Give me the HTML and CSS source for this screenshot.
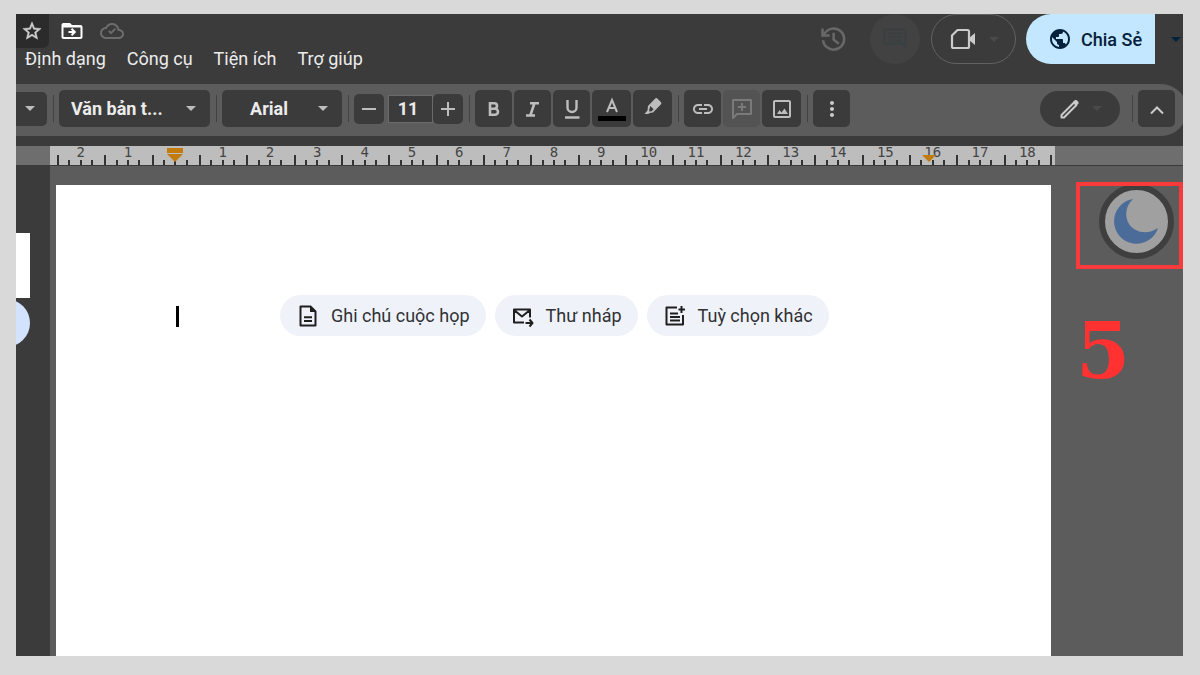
FILE: index.html
```
<!DOCTYPE html>
<html lang="vi">

<head>
    <title>Tài liệu</title>
    <meta charset="utf-8">
    <meta name="viewport" content="width=device-width, initial-scale=1">
    <link rel="stylesheet" href="styles.css">
</head>

<body>
    <div class="window">
        <header class="header">
            <div class="header-left">
                <div class="doc-actions">
                    <button class="star" aria-label="Gắn dấu sao"><svg width="22" height="22" viewBox="0 0 24 24"><path fill="#d0d0d0" stroke="#d0d0d0" stroke-width=".5" d="M22 9.24l-7.19-.62L12 2 9.19 8.63 2 9.24l5.46 4.73L5.82 21 12 17.27 18.18 21l-1.63-7.03L22 9.24zM12 15.4l-3.76 2.27 1-4.28-3.32-2.88 4.38-.38L12 6.1l1.71 4.04 4.38.38-3.32 2.88 1 4.28L12 15.4z"/></svg></button>
                    <button class="icon" aria-label="Di chuyển"><svg width="24" height="24" viewBox="0 0 24 24"><path fill="#fff" d="M20.500 6h-8.500l-2-2H3.500c-1.100 0-2 .9-2 2v12c0 1.100.9 2 2 2h17c1.100 0 2-.9 2-2V8c0-1.100-.9-2-2-2zm0 12H3.500V8.500h17V18zm-8.300-1l4-4-4-4-1.400 1.400 1.600 1.600H8.500v2h3.900l-1.600 1.600z"/></svg></button>
                    <button class="icon" aria-label="Trạng thái tài liệu"><svg width="24" height="24" viewBox="0 0 24 24"><path fill="#6c6c6c" d="M19.350 10.040C18.670 6.590 15.640 4 12 4 9.110 4 6.600 5.640 5.350 8.040 2.340 8.360 0 10.910 0 14c0 3.310 2.690 6 6 6h13c2.760 0 5-2.240 5-5 0-2.640-2.050-4.780-4.650-4.960zM19 18H6c-2.210 0-4-1.790-4-4s1.790-4 4-4h.7C7.370 7.690 9.480 6 12 6c3 0 5.500 2.500 5.500 5.500v.5H19c1.660 0 3 1.340 3 3s-1.340 3-3 3zm-8-5.200l-1.600-1.600-1.300 1.300 2.900 2.900 5-5-1.300-1.300z"/></svg></button>
                </div>
                <nav class="menu">
                    <button>Định dạng</button>
                    <button>Công cụ</button>
                    <button>Tiện ích</button>
                    <button>Trợ giúp</button>
                </nav>
            </div>
            <div class="header-right">
                <button class="icon history" aria-label="Lịch sử"><svg width="30" height="30" viewBox="0 0 24 24"><path fill="#686868" d="M12.500 2.500c-3.300 0-6.200 1.700-7.900 4.300V3.500h-2V10.200h6.700v-2H6c1.200-2.200 3.700-3.700 6.500-3.700a7.500 7.500 0 1 1-7.500 8.500H3a9.500 9.500 0 1 0 9.500-10.500zM11.500 7v6l4.500 3.500 1.200-1.600-3.700-2.900V7z"/></svg></button>
                <button class="comments" aria-label="Nhận xét"><svg width="28" height="28" viewBox="0 0 24 24"><path fill="#3a4040" d="M2 3h20v18l-4-4H2zm2 2v10h16V5zm2 1.500h12v1.500H6zm0 3h12V11H6zm0 3h12V14H6z"/></svg></button>
                <button class="meet" aria-label="Cuộc gọi"><svg width="28" height="24" viewBox="0 0 28 24"><path fill="none" stroke="#cbcbcb" stroke-width="2.200" stroke-linejoin="round" d="M8.500 3H18.500Q20 3 20 4.500V19.500Q20 21 18.500 21H4.500Q3 21 3 19.500V8.500z"/><path fill="#cbcbcb" d="M20 11l6-5v12l-6-5z"/></svg><span class="caret"></span></button>
                <button class="share"><svg width="24" height="24" viewBox="0 0 24 24"><path fill="#06213b" d="M12 2C6.480 2 2 6.480 2 12s4.480 10 10 10 10-4.480 10-10S17.520 2 12 2zm-1 17.930c-3.950-.49-7-3.850-7-7.930 0-.62.08-1.210.21-1.790L9 15v1c0 1.100.9 2 2 2v1.930zm6.900-2.540c-.26-.81-1-1.390-1.900-1.390h-1v-3c0-.55-.45-1-1-1H8v-2h2c.55 0 1-.45 1-1V7h2c1.100 0 2-.9 2-2v-.41c2.930 1.190 5 4.060 5 7.410 0 2.080-.8 3.970-2.100 5.390z"/></svg>Chia Sẻ</button>
                <button class="share-more" aria-label="Tùy chọn chia sẻ"><span class="caret"></span></button>
            </div>
        </header>

        <div class="toolbar">
            <button class="tool zoom" aria-label="Thu phóng"><span class="caret"></span></button>
            <span class="sep"></span>
            <label class="field field-style">
                <select aria-label="Kiểu"><option>Văn bản t...</option></select>
                <span class="caret"></span>
            </label>
            <span class="sep"></span>
            <label class="field field-font">
                <select aria-label="Phông chữ"><option>Arial</option></select>
                <span class="caret"></span>
            </label>
            <span class="sep"></span>
            <div class="size">
                <button class="step" aria-label="Giảm cỡ chữ"><svg width="14" height="14" viewBox="0 0 14 14"><path stroke="#bdbdbd" stroke-width="2" d="M0 7h14"/></svg></button>
                <input type="text" value="11" aria-label="Cỡ chữ">
                <button class="step" aria-label="Tăng cỡ chữ"><svg width="14" height="14" viewBox="0 0 14 14"><path stroke="#bdbdbd" stroke-width="2" d="M0 7h14M7 0v14"/></svg></button>
            </div>
            <span class="sep"></span>
            <div class="group">
                <button class="tool" aria-label="Đậm"><svg width="26" height="26" viewBox="0 0 26 26"><path fill="none" stroke="#bdbdbd" stroke-width="2.600" d="M9 7.300h4.300a2.700 2.700 0 0 1 0 5.400H9zm0 5.400h5a3 3 0 0 1 0 6H9z"/></svg></button>
                <button class="tool" aria-label="Nghiêng"><svg width="26" height="26" viewBox="0 0 26 26"><path fill="none" stroke="#bdbdbd" stroke-width="2.600" d="M10 7.300h9M6 19.500h9M14.500 7l-4 12"/></svg></button>
                <button class="tool" aria-label="Gạch chân"><svg width="26" height="26" viewBox="0 0 26 26"><path fill="none" stroke="#bdbdbd" stroke-width="2.400" d="M8.500 4v7.500a4.500 4.500 0 0 0 9 0V4M6 21.500h14.500"/></svg></button>
                <button class="tool wide" aria-label="Màu văn bản"><svg width="30" height="30" viewBox="0 0 30 30"><path fill="none" stroke="#bdbdbd" stroke-width="2" d="M10 18l5-12 5 12M11.700 14h6.600"/><path d="M1 22h28v5H1z"/></svg></button>
                <button class="tool wide" aria-label="Màu đánh dấu"><svg width="24" height="28" viewBox="0 0 24 28"><path fill="#bdbdbd" fill-rule="evenodd" d="M14 3.700q1.300-1.300 2.600 0l3.200 3.200q1.300 1.300 0 2.600L12 17.500l-3.500.5-1 1H3.500L6.500 15.500l.5-4.500zm-4.700 7.300 3.300 3.300-2 2-2.400.2.200-2.600z"/></svg></button>
            </div>
            <span class="sep"></span>
            <div class="group">
                <button class="tool" aria-label="Chèn liên kết"><svg width="24" height="24" viewBox="0 0 24 24"><path fill="#bdbdbd" d="M3.900 12c0-1.710 1.390-3.100 3.100-3.100h4V7H7c-2.760 0-5 2.240-5 5s2.240 5 5 5h4v-1.900H7c-1.710 0-3.100-1.390-3.100-3.100zM8 13h8v-2H8v2zm9-6h-4v1.900h4c1.710 0 3.100 1.390 3.100 3.100s-1.390 3.100-3.100 3.100h-4V17h4c2.760 0 5-2.240 5-5s-2.240-5-5-5z"/></svg></button>
                <button class="tool off" aria-label="Thêm nhận xét"><svg width="24" height="24" viewBox="0 0 24 24"><path fill="none" stroke="#7a7a7a" stroke-width="2" stroke-linejoin="round" d="M3 21V3h18v14H7zM12 6v8M8 10h8"/></svg></button>
                <button class="tool wide" aria-label="Chèn hình ảnh"><svg width="24" height="24" viewBox="0 0 24 24"><path fill="#bdbdbd" d="M19 5v14H5V5h14m0-2H5c-1.100 0-2 .9-2 2v14c0 1.100.9 2 2 2h14c1.100 0 2-.9 2-2V5c0-1.100-.9-2-2-2zM7 17l2.500-4 2 2.500 3-4L18 17z"/></svg></button>
            </div>
            <span class="sep"></span>
            <button class="tool" aria-label="Thêm"><svg width="24" height="24" viewBox="0 0 24 24"><path fill="#cbcbcb" d="M12 8c1.100 0 2-.9 2-2s-.9-2-2-2-2 .9-2 2 .9 2 2 2zm0 2c-1.100 0-2 .9-2 2s.9 2 2 2 2-.9 2-2-.9-2-2-2zm0 6c-1.100 0-2 .9-2 2s.9 2 2 2 2-.9 2-2-.9-2-2-2z"/></svg></button>
            <button class="mode" aria-label="Chế độ chỉnh sửa"><svg width="24" height="24" viewBox="0 0 24 24"><path fill="none" stroke="#cbcbcb" stroke-width="2" stroke-linejoin="round" d="M2.500 18L15 5.500l2.500 2.500L5 20.500H2.500z"/><path fill="#cbcbcb" d="M14 5l2-2h1.500l2 2v1.500l-2 2z"/></svg><span class="caret"></span></button>
            <span class="sep"></span>
            <button class="tool" aria-label="Ẩn trình đơn"><svg width="24" height="24" viewBox="0 0 24 24"><path fill="none" stroke="#cbcbcb" stroke-width="2" d="M6 16.500l6-6 6 6"/></svg></button>
        </div>

        <div class="ruler">
            <div class="scale">
                <span>2</span><span>1</span><span class="start"><svg width="16" height="14" viewBox="0 0 16 14"><path fill="#c27c0e" d="M0 0h16v5H0zM0 6h16l-8 8z"/></svg></span><span>1</span><span>2</span><span>3</span><span>4</span><span>5</span><span>6</span><span>7</span><span>8</span><span>9</span><span>10</span><span>11</span><span>12</span><span>13</span><span>14</span><span>15</span><span class="end">16<svg width="14" height="7" viewBox="0 0 14 7"><path fill="#c27c0e" d="M0 0h14l-7 7z"/></svg></span><span>17</span><span>18</span>
            </div>
        </div>

        <div class="workspace">
            <aside class="sidebar">
                <div class="panel"></div>
                <div class="bubble"></div>
            </aside>
            <main class="page">
                <span class="cursor"></span>
                <div class="chips">
                    <button class="chip"><svg width="24" height="24" viewBox="0 0 24 24"><path fill="none" stroke="#1f1f1f" stroke-width="2" stroke-linejoin="round" d="M4.500 2.500h10l5 5v14h-15zM8 13.200h8M8 17h8"/><path fill="#1f1f1f" d="M14 2l6 6h-6z"/></svg>Ghi chú cuộc họp</button>
                    <button class="chip"><svg width="24" height="24" viewBox="0 0 24 24"><path fill="none" stroke="#1f1f1f" stroke-width="2" stroke-linejoin="round" d="M13 18.500H3V5.500h16v8M3 6l8 6.500L19 6M14.500 19H21M18.500 15.500l3 3.500-3 3.500"/></svg>Thư nháp</button>
                    <button class="chip"><svg width="24" height="24" viewBox="0 0 24 24"><path fill="none" stroke="#1f1f1f" stroke-width="2" stroke-linejoin="round" d="M14 3.500H3.500v17H20V11M7 9.500h8M7 13h10M7 16.500h10M18.500 2v7M15.500 5.500h6.500"/></svg>Tuỳ chọn khác</button>
                </div>
            </main>
            <aside class="rail">
                <button class="dark-toggle" aria-label="Chế độ tối"><svg width="62" height="62" viewBox="0 0 62 62"><path fill="#4b6c98" d="M27 8A22.500 22.500 0 1 0 52 37C42 44 29 42 23 33C18 24 20 15 27 8z"/></svg></button>
                <div class="highlight"></div>
                <div class="number">5</div>
            </aside>
        </div>
    </div>
</body>

</html>
```

FILE: styles.css
```
* {
    box-sizing: border-box;
}

body {
    background-color: #d9d9d9;
    margin: 0;
    padding: 14px 17px 19px 16px;
    min-height: 100vh;
    display: flex;
    font-family: Roboto, "Liberation Sans", sans-serif;
    font-size: 18px;
}

button {
    border: 0;
    padding: 0;
    background: none;
    color: inherit;
    font: inherit;
    display: flex;
    align-items: center;
    justify-content: center;
    flex-shrink: 0;
    white-space: nowrap;
}

svg {
    display: block;
    flex-shrink: 0;
}

.window {
    flex: 1;
    min-width: 0;
    display: flex;
    flex-direction: column;
    background: #3b3b3b;
    overflow: hidden;
}

.caret {
    border: 5px solid transparent;
    border-top-color: #bdbdbd;
    border-bottom: 0;
}

/* header */
.header {
    display: flex;
    justify-content: space-between;
    height: 70px;
}

.doc-actions {
    display: flex;
    align-items: center;
    gap: 16px;
    height: 34px;
}

.star {
    width: 33px;
    height: 34px;
    padding-right: 2px;
    margin-right: -5px;
    background: #2b2b2b;
    border-radius: 0 0 6px 0;
}

.menu {
    display: flex;
    gap: 21px;
    padding-left: 9px;
    line-height: 21px;
    color: #ececec;
}

.header-right {
    display: flex;
    align-items: flex-start;
}

.history {
    height: 50px;
    margin-right: 22px;
}

.comments {
    width: 50px;
    height: 50px;
    margin-right: 11px;
    border-radius: 50%;
    background: #424242;
}

.meet {
    width: 85px;
    height: 50px;
    gap: 12px;
    margin-right: 10px;
    border: 1px solid #626262;
    border-radius: 25px;
}

.meet .caret,
.mode .caret {
    border-top-color: #4a4a4a;
}

.share {
    height: 50px;
    padding: 0 12px 0 21px;
    gap: 9px;
    background: #c2e7ff;
    color: #06213b;
    border-radius: 25px 0 0 25px;
    font-size: 18px;
    font-weight: 500;
    min-width: 129px;
}

.share-more {
    width: 28px;
    height: 50px;
    padding-left: 14px;
}

.share-more .caret {
    border-top-color: #06213b;
}

/* toolbar */
.toolbar {
    display: flex;
    align-items: center;
    height: 52px;
    margin-right: -4px;
    padding: 0 12px 3px 0;
    background: #5c5c5c;
    border-radius: 0 26px 26px 0;
}

.tool {
    width: 37px;
    height: 37px;
    border-radius: 5px;
    background: #3b3b3b;
}

.tool.wide {
    width: 39px;
}

.tool.off {
    background: #535353;
}

.tool.zoom {
    width: 31px;
    height: 34px;
    padding-right: 3px;
    border-radius: 0 5px 5px 0;
}

.sep {
    width: 1px;
    height: 27px;
    margin: 0 5px 0 6px;
    background: #424242;
}

.field {
    position: relative;
    height: 37px;
    border-radius: 5px;
    background: #3b3b3b;
}

.field-style {
    width: 151px;
}

.field-font {
    width: 120px;
}

.field select {
    appearance: none;
    width: 100%;
    height: 100%;
    padding: 0 20px 0 12px;
    border: 0;
    background: none;
    color: #ececec;
    font: inherit;
    font-weight: 700;
}

.field-font select {
    padding: 0 26px 0 0;
    text-align: center;
    text-align-last: center;
}

.field .caret {
    position: absolute;
    top: 16px;
    right: 14px;
    pointer-events: none;
}

.size {
    display: flex;
    align-items: center;
}

.step {
    width: 30px;
    height: 30px;
    border-radius: 5px;
    background: #3b3b3b;
}

.size input {
    width: 45px;
    height: 28px;
    margin-left: 4px;
    padding: 0 5px 0 0;
    border: 1px solid #6a6a6a;
    background: #3b3b3b;
    color: #ececec;
    font: inherit;
    font-weight: 700;
    text-align: center;
}

.group {
    display: flex;
    gap: 2px;
}

.mode {
    width: 80px;
    height: 36px;
    margin-left: auto;
    margin-right: 6px;
    gap: 9px;
    border-radius: 18px;
    background: #3b3b3b;
}

/* ruler, one grid column per centimetre */
.ruler {
    margin-top: 10px;
    padding: 0 128px 0 34px;
    background: #6e6e6e;
    border-bottom: 1px solid #3b3b3b;
}

.scale {
    display: grid;
    grid-template-columns: repeat(21, 1fr);
    height: 19px;
    padding: 0 4px 0 7px;
    background: linear-gradient(#333, #333) calc(100% - 3px) 100% / 2px 10px no-repeat #bdbdbd;
}

.scale span {
    position: relative;
    display: flex;
    justify-content: center;
    font: 14px/13px "DejaVu Sans Mono", monospace;
    color: #444;
    background:
        linear-gradient(#333, #333) 0 100% / 2px 10px,
        linear-gradient(#333, #333) 25% 100% / 2px 5px,
        linear-gradient(#333, #333) 50% 100% / 2px 5px,
        linear-gradient(#333, #333) 75% 100% / 2px 5px;
    background-repeat: no-repeat;
}

.scale .start {
    padding-top: 2px;
}

.end svg {
    position: absolute;
    left: 13px;
    top: 9px;
}

/* workspace */
.workspace {
    flex: 1;
    display: flex;
    background: #5c5c5c;
}

.sidebar {
    width: 34px;
    margin-right: 6px;
    padding-top: 67px;
    background: #3b3b3b;
    overflow: hidden;
}

.panel {
    width: 14px;
    height: 65px;
    background: #fff;
}

.bubble {
    width: 48px;
    height: 48px;
    margin: 1px 0 0 -34px;
    border-radius: 50%;
    background: #d3e3fd;
}

.page {
    flex: 1;
    display: flex;
    align-items: flex-start;
    margin-top: 19px;
    padding: 110px 0 0 120px;
    background: #fff;
}

.cursor {
    width: 3px;
    height: 21px;
    margin: 11px 101px 0 0;
    background: #000;
}

.chips {
    display: flex;
    gap: 9px;
}

.chip {
    height: 41px;
    padding: 0 16px;
    gap: 11px;
    border-radius: 21px;
    background: #eff3f9;
    color: #303134;
}

.rail {
    position: relative;
    width: 132px;
    padding: 18px 9px 0 0;
}

.dark-toggle {
    width: 75px;
    height: 75px;
    margin-left: auto;
    border: 6px solid #3f3f3f;
    border-radius: 50%;
    background: #a0a0a0;
}

.highlight {
    position: absolute;
    top: 16px;
    right: 0;
    width: 107px;
    height: 87px;
    border: 4px solid #f93a3a;
}

.number {
    margin: 46px 0 0 25px;
    color: #ff3131;
    font: bold 78px/92px "DejaVu Serif", serif;
}
```
